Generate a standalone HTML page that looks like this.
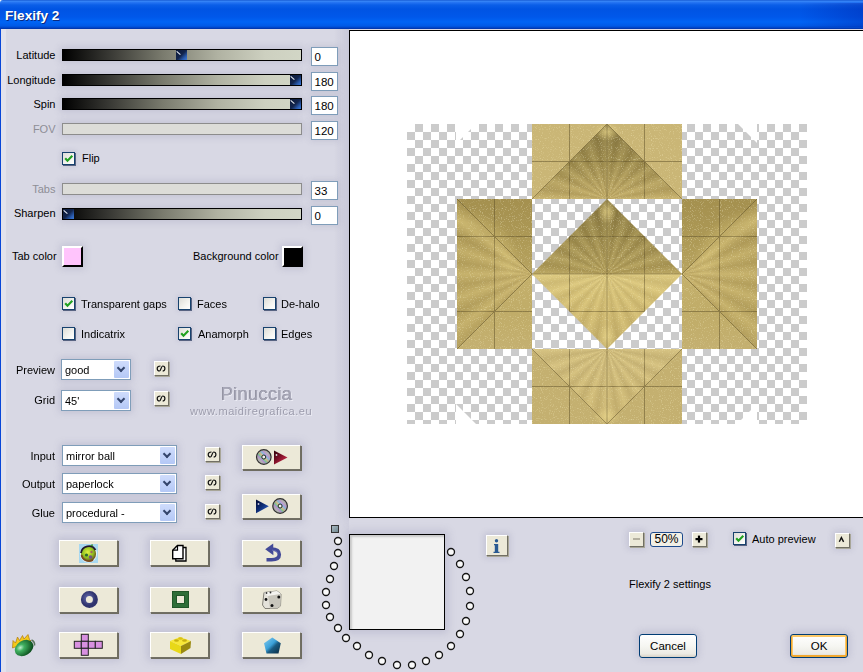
<!DOCTYPE html>
<html><head><meta charset="utf-8">
<style>
*{box-sizing:border-box}
html,body{margin:0;padding:0}
body{width:863px;height:672px;overflow:hidden;position:relative;background:#d8d8e4;font-family:"Liberation Sans",sans-serif;font-size:11px;color:#000}
.a{position:absolute}
#title{left:0;top:0;width:863px;height:29px;background:linear-gradient(to bottom,#0848c8 0px,#3c8cf8 1px,#2a78f4 2px,#0a5ee8 5px,#0054e3 9px,#0058ea 17px,#0064f4 22px,#005ae6 26px,#0040c0 28px,#0030a0 29px)}
#title span{position:absolute;left:5px;top:8px;font-size:13.6px;font-weight:bold;color:#fff;text-shadow:1px 1px 0 #0a2a80}
#lborder{left:0;top:29px;width:1px;height:643px;background:#0846d8}
.lab{position:absolute;text-align:right;width:60px;line-height:12px}
.dis{color:#8e8e96}
.sl{position:absolute;left:62px;width:240px;height:12px;border:1px solid #000;box-shadow:0 0 7px 2px rgba(110,110,150,0.2);background:linear-gradient(to right,#000 0%,#343430 18%,#7a7b6e 42%,#b0b2a2 65%,#cdd0c0 85%,#d2d6c6 100%)}
.sl.dis{border-color:#8c8c8c;background:#dcdcd8}
.th{position:absolute;top:0;width:11px;height:10px;background:linear-gradient(135deg,#0c1a3a 0%,#12244c 50%,#2a5cb0 78%,#3c7ad8 100%)}
.th:after{content:"";position:absolute;left:1px;top:0.5px;width:4.5px;height:1.3px;background:#eef2fa;transform:rotate(42deg);transform-origin:0 0}
.num{position:absolute;left:311px;width:27px;height:19px;border:1px solid #7f9db9;background:#fff;padding:2px 0 0 2.5px;line-height:14px;font-size:11.5px;box-shadow:0 0 6px 1px rgba(110,110,150,0.18)}
.cb{position:absolute;width:13px;height:13px;border:1px solid #17426e;box-shadow:1px 1px 0 rgba(10,30,70,0.6),0 0 5px 1px rgba(110,110,150,0.2);background:linear-gradient(135deg,#dcdcd7 0%,#f4f4f0 60%,#fff 100%)}
.cb svg{position:absolute;left:-1px;top:-1px}
.txt{position:absolute;line-height:12px;white-space:nowrap}
.sw{position:absolute;width:21px;height:21px;border:2px solid;border-width:2px 2px 2px 2px;border-color:#fff #000 #000 #fff;box-shadow:0 0 7px 2px rgba(110,110,150,0.2)}
.dd{position:absolute;left:61px;height:21px;border:1px solid #7f9db9;background:#fff;box-shadow:0 0 7px 2px rgba(110,110,150,0.2)}
.dd span{position:absolute;left:3px;top:4px;line-height:13px}
.dd i{position:absolute;right:1px;top:1px;width:15px;height:17px;background:linear-gradient(to bottom,#cfdcfc,#b4c8f6);border-radius:1px}
.dd i:after{content:"";position:absolute;left:4px;top:4px;width:4px;height:4px;border:solid #34456c;border-width:0 2px 2px 0;transform:rotate(45deg)}
.sb{position:absolute;width:15px;height:15px;background:#ece9d8;border:1px solid;border-color:#fff #716f64 #716f64 #fff;box-shadow:1px 1px 0 #a8a698,0 0 6px 2px rgba(110,110,150,0.2)}
.sb b{position:absolute;left:1px;top:0px;font-weight:bold;font-size:9.5px;transform:rotate(90deg);line-height:13px;width:12px;height:13px;text-align:center}
.bt{position:absolute;width:59px;height:26px;background:#ece9d8;border:1px solid;border-color:#fff #716f64 #716f64 #fff;box-shadow:1px 1px 0 #6e6c60,0 0 8px 3px rgba(110,110,150,0.22)}
#prev{left:349px;top:30px;width:514px;height:488px;border:1px solid #000;border-right:0;background:#fff}
.xpb{border:1px solid #003c74;border-radius:3px;background:linear-gradient(to bottom,#fff 0%,#f6f6f2 50%,#ecebe4 85%,#d8d2c6 100%);text-align:center;line-height:22px;font-size:11.5px;box-shadow:0 -1px 7px 2px rgba(110,110,150,0.2)}
.xpb.ok{box-shadow:inset 0 -1px 0 1px #f0a830,inset 0 0 0 2px #fcc868,0 -1px 7px 2px rgba(110,110,150,0.2)}
</style></head><body>
<div class="a" style="left:0;top:0;width:4px;height:4px;background:#fff"></div>
<div id="title" class="a" style="border-top-left-radius:3px"><span>Flexify 2</span></div>
<div class="a" style="left:800px;top:3px;width:63px;height:24px;background:linear-gradient(to right,rgba(0,20,150,0),rgba(0,20,150,0.3))"></div>
<div id="lborder" class="a"></div>
<div class="a" style="left:1px;top:29px;width:5px;height:643px;background:#e2e2ec"></div>
<div class="a" style="left:334px;top:29px;width:15px;height:510px;background:linear-gradient(to right,rgba(120,120,160,0),rgba(120,120,160,0.16));-webkit-mask-image:linear-gradient(to bottom,#000 0,#000 480px,transparent 510px);mask-image:linear-gradient(to bottom,#000 0,#000 480px,transparent 510px)"></div>

<!-- sliders -->
<div class="lab" style="left:-4.5px;top:49px">Latitude</div>
<div class="sl" style="top:49px"><div class="th" style="left:113px"></div></div>
<div class="num" style="top:47px">0</div>

<div class="lab" style="left:-4.5px;top:74px">Longitude</div>
<div class="sl" style="top:74px"><div class="th" style="left:227px"></div></div>
<div class="num" style="top:72px">180</div>

<div class="lab" style="left:-4.5px;top:98px">Spin</div>
<div class="sl" style="top:98px"><div class="th" style="left:227px"></div></div>
<div class="num" style="top:96px">180</div>

<div class="lab dis" style="left:-4.5px;top:123px">FOV</div>
<div class="sl dis" style="top:123px"></div>
<div class="num" style="top:121px">120</div>

<div class="cb on" style="left:62px;top:152px"><svg width="13" height="13"><path d="M3.2,6.2 L5.5,8.8 L10.3,3.8" stroke="#21a121" stroke-width="2.1" fill="none"/></svg></div>
<div class="txt" style="left:82px;top:152px">Flip</div>

<div class="lab dis" style="left:-4.5px;top:183px">Tabs</div>
<div class="sl dis" style="top:183px"></div>
<div class="num" style="top:181px">33</div>

<div class="lab" style="left:-4.5px;top:207px">Sharpen</div>
<div class="sl" style="top:208px"><div class="th" style="left:0px"></div></div>
<div class="num" style="top:206px">0</div>

<div class="txt" style="left:12px;top:250px">Tab color</div>
<div class="sw" style="left:62px;top:246px;background:#ffc4fc"></div>
<div class="txt" style="left:193px;top:250px">Background color</div>
<div class="sw" style="left:282px;top:246px;background:#000"></div>

<div id="prev" class="a"></div>
<div class="a" id="pv" style="left:0;top:0;width:863px;height:672px;filter:saturate(1.0)">
<svg class="a" style="left:407px;top:124px" width="400" height="300" viewBox="0 0 400 300">
<defs>
<pattern id="chk" width="16" height="16" patternUnits="userSpaceOnUse"><rect width="16" height="16" fill="#fff"/><rect x="8" y="0" width="8" height="8" fill="#cbcbcb"/><rect x="0" y="8" width="8" height="8" fill="#cbcbcb"/></pattern>
<linearGradient id="tA" gradientUnits="userSpaceOnUse" x1="0" y1="0" x2="0" y2="75"><stop offset="0" stop-color="#867640"/><stop offset="0.5" stop-color="#9c8a4c"/><stop offset="1" stop-color="#c2ac68"/></linearGradient>
<linearGradient id="bV" gradientUnits="userSpaceOnUse" x1="0" y1="225" x2="0" y2="300"><stop offset="0" stop-color="#d2be7e"/><stop offset="1" stop-color="#ccb672"/></linearGradient>
<linearGradient id="dT" gradientUnits="userSpaceOnUse" x1="0" y1="75" x2="0" y2="150"><stop offset="0" stop-color="#86763e"/><stop offset="1" stop-color="#b29e5a"/></linearGradient>
<linearGradient id="dB" gradientUnits="userSpaceOnUse" x1="0" y1="150" x2="0" y2="225"><stop offset="0" stop-color="#dcc87e"/><stop offset="0.5" stop-color="#d2bc72"/><stop offset="1" stop-color="#c6b06a"/></linearGradient>
<linearGradient id="sideV" gradientUnits="userSpaceOnUse" x1="0" y1="75" x2="0" y2="225"><stop offset="0" stop-color="#a89454"/><stop offset="0.25" stop-color="#b4a05c"/><stop offset="0.5" stop-color="#c4b06c"/><stop offset="0.75" stop-color="#c0ac68"/><stop offset="1" stop-color="#c4b070"/></linearGradient>
<linearGradient id="lT" gradientUnits="userSpaceOnUse" x1="50" y1="0" x2="125" y2="0"><stop offset="0" stop-color="#b6a05a"/><stop offset="1" stop-color="#c8b068"/></linearGradient>
<linearGradient id="rT" gradientUnits="userSpaceOnUse" x1="350" y1="0" x2="275" y2="0"><stop offset="0" stop-color="#b6a05a"/><stop offset="1" stop-color="#c8b068"/></linearGradient>
<filter id="nz" x="0" y="0" width="100%" height="100%"><feTurbulence type="fractalNoise" baseFrequency="0.9" numOctaves="1" seed="3" result="t"/><feColorMatrix in="t" type="matrix" values="0 0 0 0 1  0 0 0 0 0.93  0 0 0 0 0.55  0 0 0 1.4 -0.8" result="c"/><feComposite in="c" in2="SourceAlpha" operator="in" result="m"/><feMerge><feMergeNode in="SourceGraphic"/><feMergeNode in="m"/></feMerge></filter>
<radialGradient id="spk" cx="0.5" cy="0.5" r="0.5"><stop offset="0" stop-color="#e8d488" stop-opacity="0.75"/><stop offset="1" stop-color="#e8d488" stop-opacity="0"/></radialGradient>
<radialGradient id="swl" cx="0.5" cy="0.5" r="0.5"><stop offset="0.55" stop-color="#e0cc80" stop-opacity="0"/><stop offset="0.75" stop-color="#e0cc80" stop-opacity="0.35"/><stop offset="0.95" stop-color="#e0cc80" stop-opacity="0"/></radialGradient>
</defs>
<rect width="400" height="300" fill="url(#chk)"/>
<polygon points="49,0 69,0 49,20" fill="#fff"/>
<polygon points="331,0 350,0 350,19" fill="#fff"/>
<polygon points="49,280 49,300 69,300" fill="#fff"/>
<polygon points="350,280 350,300 330,300" fill="#fff"/>
<g filter="url(#nz)">
<rect x="125" y="0" width="150" height="75" fill="#cab676"/>
<polygon points="200,0 125,75 275,75" fill="url(#tA)"/>
<rect x="50" y="75" width="75" height="150" fill="url(#sideV)"/>
<polygon points="50,75 125,75 125,150" fill="#9a8846" opacity="0.3"/>
<polygon points="50,75 125,150 50,225" fill="url(#lT)" opacity="0.5"/>
<rect x="275" y="75" width="75" height="150" fill="url(#sideV)"/>
<polygon points="350,75 275,75 275,150" fill="#9a8846" opacity="0.3"/>
<polygon points="350,75 275,150 350,225" fill="url(#rT)" opacity="0.5"/>
<rect x="125" y="225" width="150" height="75" fill="#c4b070"/>
<polygon points="125,225 275,225 200,300" fill="url(#bV)"/>
<polygon points="200,75 275,150 125,150" fill="url(#dT)"/>
<polygon points="125,150 275,150 200,225" fill="url(#dB)"/>
</g>
<g>
<ellipse cx="200" cy="8" rx="14" ry="9" fill="url(#spk)"/>
<ellipse cx="200" cy="88" rx="10" ry="12" fill="url(#spk)"/>
<ellipse cx="200" cy="212" rx="10" ry="12" fill="url(#spk)"/>
<ellipse cx="200" cy="292" rx="14" ry="9" fill="url(#spk)"/>
<clipPath id="clL"><rect x="50" y="75" width="75" height="75"/></clipPath>
<clipPath id="clR"><rect x="275" y="75" width="75" height="75"/></clipPath>
<circle cx="50" cy="150" r="70" fill="url(#swl)" clip-path="url(#clL)"/>
<circle cx="350" cy="150" r="70" fill="url(#swl)" clip-path="url(#clR)"/>
</g>
<g stroke="#5e5028" stroke-width="1" fill="none" opacity="0.5">
<path d="M162.5,0V75M200,0V75M237.5,0V75M125,37.5H275"/>
<path d="M200,0L125,75M200,0L275,75"/>
<path d="M162.5,225V300M200,225V300M237.5,225V300M125,262.5H275"/>
<path d="M125,225L200,300M275,225L200,300"/>
<path d="M87.5,75V225M50,112.5H125M50,187.5H125"/>
<path d="M50,75L125,150L50,225"/>
<path d="M312.5,75V225M275,112.5H350M275,187.5H350"/>
<path d="M350,75L275,150L350,225"/>
<path d="M162.5,112.5V187.5M200,75V225M237.5,112.5V187.5M162.5,112.5H237.5M125,150H275M162.5,187.5H237.5"/>
</g>
</svg>
<div class="a ray" style="left:532px;top:124px;width:150px;height:75px;clip-path:polygon(75px 0,0 75px,150px 75px);background:repeating-conic-gradient(from 0deg at 75px 75px,rgba(255,240,170,0.13) 0deg,rgba(60,45,10,0.08) 9deg,rgba(255,240,170,0.13) 18deg)"></div>
<div class="a ray" style="left:532px;top:349px;width:150px;height:75px;clip-path:polygon(0 0,150px 0,75px 75px);background:repeating-conic-gradient(from 0deg at 75px 0px,rgba(255,240,170,0.13) 0deg,rgba(60,45,10,0.08) 9deg,rgba(255,240,170,0.13) 18deg)"></div>
<div class="a ray" style="left:457px;top:199px;width:75px;height:150px;clip-path:polygon(0 0,75px 75px,0 150px);background:repeating-conic-gradient(from 0deg at 75px 75px,rgba(255,240,170,0.13) 0deg,rgba(60,45,10,0.08) 9deg,rgba(255,240,170,0.13) 18deg)"></div>
<div class="a ray" style="left:682px;top:199px;width:75px;height:150px;clip-path:polygon(75px 0,0 75px,75px 150px);background:repeating-conic-gradient(from 0deg at 0px 75px,rgba(255,240,170,0.13) 0deg,rgba(60,45,10,0.08) 9deg,rgba(255,240,170,0.13) 18deg)"></div>
<div class="a ray" style="left:532px;top:199px;width:150px;height:150px;clip-path:polygon(75px 0,150px 75px,75px 150px,0 75px);background:repeating-conic-gradient(from 0deg at 75px 75px,rgba(255,240,170,0.13) 0deg,rgba(60,45,10,0.08) 9deg,rgba(255,240,170,0.13) 18deg)"></div>

<div class="cb on" style="left:62px;top:297px"><svg width="13" height="13"><path d="M3.2,6.2 L5.5,8.8 L10.3,3.8" stroke="#21a121" stroke-width="2.1" fill="none"/></svg></div>
<div class="txt" style="left:81px;top:298px">Transparent gaps</div>
<div class="cb" style="left:178px;top:297px"></div>
<div class="txt" style="left:197px;top:298px">Faces</div>
<div class="cb" style="left:263px;top:297px"></div>
<div class="txt" style="left:281px;top:298px">De-halo</div>
<div class="cb" style="left:62px;top:327px"></div>
<div class="txt" style="left:81px;top:328px">Indicatrix</div>
<div class="cb on" style="left:178px;top:327px"><svg width="13" height="13"><path d="M3.2,6.2 L5.5,8.8 L10.3,3.8" stroke="#21a121" stroke-width="2.1" fill="none"/></svg></div>
<div class="txt" style="left:198px;top:328px">Anamorph</div>
<div class="cb" style="left:263px;top:327px"></div>
<div class="txt" style="left:281px;top:328px">Edges</div>

<div class="lab" style="left:-5px;top:364px">Preview</div>
<div class="dd" style="top:359px;width:70px"><span>good</span><i></i></div>
<div class="sb" style="left:154px;top:361px"></div>
<div class="lab" style="left:-5px;top:394px">Grid</div>
<div class="dd" style="top:390px;width:70px"><span>45'</span><i></i></div>
<div class="sb" style="left:154px;top:391px"></div>

<div class="txt" id="wm1" style="left:221px;top:385px;font-size:18.5px;line-height:18px;color:#a6a6b6;letter-spacing:0.2px;text-shadow:-0.5px -0.3px 0 #80808f,0.6px 0.6px 0 #eeeef6">Pinuccia</div>
<div class="txt" id="wm2" style="left:190px;top:405px;font-size:11px;line-height:12px;color:#9c9cac;letter-spacing:0.55px;text-shadow:0.6px 0.6px 0 #eeeef6">www.maidiregrafica.eu</div>

<div class="lab" style="left:-5px;top:450px">Input</div>
<div class="dd" style="left:62px;top:445px;width:115px"><span>mirror ball</span><i></i></div>
<div class="sb" style="left:205px;top:447px"></div>
<div class="lab" style="left:-5px;top:478px">Output</div>
<div class="dd" style="left:62px;top:473px;width:115px"><span>paperlock</span><i></i></div>
<div class="sb" style="left:205px;top:475px"></div>
<div class="lab" style="left:-5px;top:507px">Glue</div>
<div class="dd" style="left:62px;top:502px;width:115px"><span>procedural -</span><i></i></div>
<div class="sb" style="left:205px;top:504px"></div>

<div class="bt" style="left:242px;top:445px;width:59px;height:25px"></div>
<div class="bt" style="left:242px;top:494px;width:59px;height:25px"></div>

<div class="bt" style="left:59px;top:540px"></div>
<div class="bt" style="left:150px;top:540px"></div>
<div class="bt" style="left:242px;top:540px"></div>
<div class="bt" style="left:59px;top:587px"></div>
<div class="bt" style="left:150px;top:587px"></div>
<div class="bt" style="left:242px;top:587px"></div>
<div class="bt" style="left:59px;top:632px"></div>
<div class="bt" style="left:150px;top:632px"></div>
<div class="bt" style="left:242px;top:632px"></div>

</div>
<div class="a" style="left:331px;top:525px;width:8px;height:8px;border:1px solid #333;background:linear-gradient(135deg,#a8b8c0,#708890)"></div>
<div class="a" style="left:349px;top:534px;width:96px;height:96px;border:1.5px solid #000;background:#f2f2f2;box-shadow:inset 2px 2px 2px #c8c8c8,0 0 8px 3px rgba(110,110,150,0.22)"></div>
<svg class="a" style="left:0;top:0" width="863" height="672" id="dots"><circle cx="338" cy="541" r="3.5" fill="#fafafa" stroke="#151515" stroke-width="1.35"/><circle cx="338" cy="553" r="3.5" fill="#fafafa" stroke="#151515" stroke-width="1.35"/><circle cx="334" cy="566" r="3.5" fill="#fafafa" stroke="#151515" stroke-width="1.35"/><circle cx="330" cy="579" r="3.5" fill="#fafafa" stroke="#151515" stroke-width="1.35"/><circle cx="326" cy="592" r="3.5" fill="#fafafa" stroke="#151515" stroke-width="1.35"/><circle cx="326" cy="605" r="3.5" fill="#fafafa" stroke="#151515" stroke-width="1.35"/><circle cx="330" cy="617" r="3.5" fill="#fafafa" stroke="#151515" stroke-width="1.35"/><circle cx="338" cy="628" r="3.5" fill="#fafafa" stroke="#151515" stroke-width="1.35"/><circle cx="346" cy="638" r="3.5" fill="#fafafa" stroke="#151515" stroke-width="1.35"/><circle cx="357" cy="646" r="3.5" fill="#fafafa" stroke="#151515" stroke-width="1.35"/><circle cx="369" cy="655" r="3.5" fill="#fafafa" stroke="#151515" stroke-width="1.35"/><circle cx="382" cy="661" r="3.5" fill="#fafafa" stroke="#151515" stroke-width="1.35"/><circle cx="397" cy="665" r="3.5" fill="#fafafa" stroke="#151515" stroke-width="1.35"/><circle cx="412" cy="665" r="3.5" fill="#fafafa" stroke="#151515" stroke-width="1.35"/><circle cx="426" cy="661" r="3.5" fill="#fafafa" stroke="#151515" stroke-width="1.35"/><circle cx="439" cy="655" r="3.5" fill="#fafafa" stroke="#151515" stroke-width="1.35"/><circle cx="451" cy="646" r="3.5" fill="#fafafa" stroke="#151515" stroke-width="1.35"/><circle cx="460" cy="634" r="3.5" fill="#fafafa" stroke="#151515" stroke-width="1.35"/><circle cx="466" cy="621" r="3.5" fill="#fafafa" stroke="#151515" stroke-width="1.35"/><circle cx="470" cy="606" r="3.5" fill="#fafafa" stroke="#151515" stroke-width="1.35"/><circle cx="470" cy="591" r="3.5" fill="#fafafa" stroke="#151515" stroke-width="1.35"/><circle cx="466" cy="577" r="3.5" fill="#fafafa" stroke="#151515" stroke-width="1.35"/><circle cx="460" cy="564" r="3.5" fill="#fafafa" stroke="#151515" stroke-width="1.35"/><circle cx="451" cy="552" r="3.5" fill="#fafafa" stroke="#151515" stroke-width="1.35"/></svg>

<div class="a" style="left:486px;top:535px;width:22px;height:21px;background:#ece9d8;border:1px solid;border-color:#fff #716f64 #716f64 #fff;box-shadow:1px 1px 0 #a8a698,0 0 6px 2px rgba(110,110,150,0.2)"></div>

<div class="sb" style="left:629px;top:532px"></div>
<div class="a" style="left:650px;top:532px;width:33px;height:15px;border:1px solid #1c4a8c;border-radius:3px;background:#f2f0e6;text-align:center;line-height:13px;font-size:12px">50%</div>
<div class="sb" style="left:692px;top:532px"></div>
<div class="cb on" style="left:733px;top:532px"><svg width="13" height="13"><path d="M3.2,6.2 L5.5,8.8 L10.3,3.8" stroke="#21a121" stroke-width="2.1" fill="none"/></svg></div>
<div class="txt" style="left:752px;top:533px">Auto preview</div>
<div class="sb" style="left:835px;top:533px"></div>

<div class="txt" style="left:629px;top:578px">Flexify 2 settings</div>
<div class="a xpb" style="left:639px;top:634px;width:58px;height:24px">Cancel</div>
<div class="a xpb ok" style="left:790px;top:634px;width:58px;height:24px">OK</div>

<svg class="a" style="left:0;top:0;pointer-events:none" width="863" height="672">
<defs>
<radialGradient id="cdg" cx="0.5" cy="0.5" r="0.5"><stop offset="0.2" stop-color="#d0d0d0"/><stop offset="1" stop-color="#a4a4a4"/></radialGradient>
<linearGradient id="rb" x1="0" y1="1" x2="1" y2="0"><stop offset="0.18" stop-color="#b0b0b0" stop-opacity="0"/><stop offset="0.3" stop-color="#b070e0" stop-opacity="0.85"/><stop offset="0.4" stop-color="#50d080" stop-opacity="0.85"/><stop offset="0.5" stop-color="#f0b050" stop-opacity="0.6"/><stop offset="0.6" stop-color="#60c0f0" stop-opacity="0.85"/><stop offset="0.7" stop-color="#c080e0" stop-opacity="0.85"/><stop offset="0.82" stop-color="#b0b0b0" stop-opacity="0"/></linearGradient>
<linearGradient id="redt" x1="0" y1="0" x2="1" y2="1"><stop offset="0" stop-color="#2a0008"/><stop offset="0.45" stop-color="#801028"/><stop offset="1" stop-color="#e83858"/></linearGradient>
<linearGradient id="blut" x1="0" y1="0" x2="1" y2="1"><stop offset="0" stop-color="#000830"/><stop offset="0.5" stop-color="#10307a"/><stop offset="1" stop-color="#3870e0"/></linearGradient>
<radialGradient id="plg" cx="0.45" cy="0.4" r="0.6"><stop offset="0" stop-color="#e0f040"/><stop offset="0.6" stop-color="#90c020"/><stop offset="1" stop-color="#6a4a20"/></radialGradient>
<linearGradient id="pent" x1="0" y1="0" x2="1" y2="1"><stop offset="0" stop-color="#8ad0f0"/><stop offset="0.45" stop-color="#3aa0d8"/><stop offset="0.6" stop-color="#1a5a80"/><stop offset="1" stop-color="#0a2a40"/></linearGradient>
<radialGradient id="pear" cx="0.35" cy="0.35" r="0.7"><stop offset="0" stop-color="#c0f0d0"/><stop offset="0.3" stop-color="#40b060"/><stop offset="1" stop-color="#0a4a1a"/></radialGradient>
<radialGradient id="ring" cx="0.4" cy="0.4" r="0.6"><stop offset="0" stop-color="#6a70b4"/><stop offset="1" stop-color="#30346e"/></radialGradient>
</defs>
<!-- big button 1: CD + red triangle -->
<circle cx="263.8" cy="457" r="7.3" fill="url(#cdg)" stroke="#303030" stroke-width="1.2"/>
<circle cx="263.8" cy="457" r="6.3" fill="url(#rb)" opacity="0.75"/>
<circle cx="263.8" cy="457" r="2" fill="#f0f0f0" stroke="#202020" stroke-width="1"/>
<polygon points="274,450.5 287.5,457.5 274,464.5" fill="url(#redt)"/>
<circle cx="276.5" cy="455" r="0.9" fill="#ddd"/>
<!-- big button 2 -->
<polygon points="256,499.5 268.8,506.3 256,513.3" fill="url(#blut)"/>
<circle cx="258.5" cy="504" r="0.9" fill="#ccd"/>
<circle cx="280.1" cy="506" r="7.3" fill="url(#cdg)" stroke="#303030" stroke-width="1.2"/>
<circle cx="280.1" cy="506" r="6.3" fill="url(#rb)" opacity="0.75"/>
<circle cx="280.1" cy="506" r="2" fill="#f0f0f0" stroke="#202020" stroke-width="1"/>
<!-- A1 planet -->
<rect x="79" y="544" width="19" height="19" fill="#a8d8f0"/>
<circle cx="88.5" cy="553.8" r="8.6" fill="#e8f4fa"/>
<circle cx="88.5" cy="553.8" r="7.6" fill="url(#plg)"/>
<path d="M81,553 A7.8,7.8 0 0 1 95.5,550" stroke="#201830" stroke-width="1.8" fill="none"/>
<path d="M81.5,555 A7.6,7.6 0 0 0 93,560" stroke="#7a4a20" stroke-width="1.6" fill="none"/>
<circle cx="86.5" cy="555" r="1.6" fill="#2a6a30"/>
<circle cx="90.5" cy="557" r="1.8" fill="#6a3aa0" opacity="0.8"/>
<circle cx="91.5" cy="552" r="1.2" fill="#a04a70" opacity="0.8"/>
<path d="M90,545.5 L92.5,544 L93,546.5" fill="#3a8a30"/>
<!-- A2 pages -->
<path d="M175.8,547.5H186V561H175.8Z" fill="#fff" stroke="#000" stroke-width="1.3"/>
<path d="M177.5,545.5H183V558.8H172.7V550.2Z" fill="#fff" stroke="#000" stroke-width="1.4"/>
<path d="M172.7,550.2H177.5V545.5" fill="none" stroke="#000" stroke-width="1.2"/>
<!-- A3 undo -->
<path d="M271,549 C276.5,549 279.3,551 279.3,554.6 C279.3,558.3 276,559.8 271.5,559.8 L266.5,559.8" stroke="#434a98" stroke-width="3.6" fill="none"/>
<polygon points="265.2,549.3 273.2,543.6 273.4,555.2" fill="#434a98"/>
<path d="M272,550.2 C275.5,550.5 277.5,551.5 277.8,553.5" stroke="#7a80c0" stroke-width="0.9" fill="none" opacity="0.7"/>
<!-- B1 ring -->
<circle cx="89.4" cy="599.4" r="6" fill="none" stroke="url(#ring)" stroke-width="5"/>
<!-- B2 green square -->
<rect x="174.5" y="593.5" width="12" height="12" fill="none" stroke="#2e6e38" stroke-width="5"/>
<rect x="172.4" y="591.4" width="16.2" height="16.2" fill="none" stroke="#1e5226" stroke-width="0.8"/>
<rect x="176.6" y="595.6" width="7.8" height="7.8" fill="none" stroke="#1e5226" stroke-width="0.8"/>
<!-- B3 die -->
<path d="M264,592.5 L277,591 L281,594 L280.5,606 L277,608.5 L265,608.5 L262.5,605 Z" fill="#e4e2da" stroke="#6a6860" stroke-width="0.8"/>
<path d="M264,592.5 L277,591 L281,594 L268,596 Z" fill="#f4f4f0"/>
<path d="M268,596 L281,594 L280.5,606 L277,608.5 L270,608.5 Z" fill="#c8c6bc"/>
<circle cx="266" cy="599.5" r="1.4" fill="#111"/>
<circle cx="278.8" cy="597" r="1.5" fill="#111"/>
<circle cx="272" cy="605.5" r="1.5" fill="#111"/>
<circle cx="266.5" cy="593" r="0.9" fill="#333"/>
<circle cx="270.5" cy="592.5" r="0.9" fill="#333"/>
<!-- C1 cross -->
<g fill="#d890e0" stroke="#222" stroke-width="1">
<rect x="81.3" y="634.3" width="7" height="7"/>
<rect x="74.3" y="641.3" width="7" height="7"/>
<rect x="81.3" y="641.3" width="7" height="7"/>
<rect x="88.3" y="641.3" width="7" height="7"/>
<rect x="95.3" y="641.3" width="7" height="7"/>
<rect x="81.3" y="648.3" width="7" height="7"/>
</g>
<!-- C2 lego -->
<path d="M170,641 L180,637 L191,641 L181,646 Z" fill="#f8e838"/>
<path d="M170,641 L181,646 L181,654 L170,649 Z" fill="#e8d818"/>
<path d="M181,646 L191,641 L190.5,648 L181,654 Z" fill="#9a8a10"/>
<ellipse cx="176.5" cy="640.5" rx="2.4" ry="1.3" fill="#c8b010"/>
<ellipse cx="184.5" cy="640.5" rx="2.4" ry="1.3" fill="#c8b010"/>
<ellipse cx="180.5" cy="638.5" rx="2.4" ry="1.3" fill="#d8c018"/>
<!-- C3 pentagon -->
<polygon points="272.3,637.4 280.8,643.2 278.5,653.5 266.5,653.5 264,643.2" fill="url(#pent)"/>
<!-- flaming pear -->
<path d="M12.5,648 L13,640.5 L15.5,643 L17.5,637 L19.5,640.5 L22.5,635.5 L24,639 L28,634.5 L29.5,639.5 L31,641 Z" fill="#f4c818" stroke="#b07a10" stroke-width="0.7"/>
<ellipse cx="24" cy="648" rx="10" ry="7.3" transform="rotate(-32 24 648)" fill="url(#pear)"/>
<path d="M31.5,640 Q35,641.5 34.5,645.5" stroke="#3a5a3a" stroke-width="1.6" fill="none" opacity="0.8"/>
<!-- zoom glyphs -->
<rect x="633" y="538" width="7" height="2" fill="#b4b0a0"/>
<rect x="695.5" y="538" width="7" height="2.2" fill="#000"/>
<rect x="697.9" y="535.6" width="2.2" height="7" fill="#000"/>
<path d="M839.3,541.8 L841.4,537.6 L843.6,541.9" stroke="#111" stroke-width="1.4" fill="none"/>
<!-- S glyphs -->
<path d="M160.5,366 C158.2,366 157.2,367.3 157.2,368.5 C157.2,369.8 158.2,371 159.5,371 C160.8,371 161.3,366 162.6,366 C164,366 164.9,367.2 164.9,368.5 C164.9,369.8 164,371 162.6,371" transform="translate(0,0)" stroke="#111" stroke-width="1.2" fill="none"/>
<path d="M160.5,366 C158.2,366 157.2,367.3 157.2,368.5 C157.2,369.8 158.2,371 159.5,371 C160.8,371 161.3,366 162.6,366 C164,366 164.9,367.2 164.9,368.5 C164.9,369.8 164,371 162.6,371" transform="translate(0,30)" stroke="#111" stroke-width="1.2" fill="none"/>
<path d="M160.5,366 C158.2,366 157.2,367.3 157.2,368.5 C157.2,369.8 158.2,371 159.5,371 C160.8,371 161.3,366 162.6,366 C164,366 164.9,367.2 164.9,368.5 C164.9,369.8 164,371 162.6,371" transform="translate(51,86)" stroke="#111" stroke-width="1.2" fill="none"/>
<path d="M160.5,366 C158.2,366 157.2,367.3 157.2,368.5 C157.2,369.8 158.2,371 159.5,371 C160.8,371 161.3,366 162.6,366 C164,366 164.9,367.2 164.9,368.5 C164.9,369.8 164,371 162.6,371" transform="translate(51,114)" stroke="#111" stroke-width="1.2" fill="none"/>
<path d="M160.5,366 C158.2,366 157.2,367.3 157.2,368.5 C157.2,369.8 158.2,371 159.5,371 C160.8,371 161.3,366 162.6,366 C164,366 164.9,367.2 164.9,368.5 C164.9,369.8 164,371 162.6,371" transform="translate(51,143)" stroke="#111" stroke-width="1.2" fill="none"/>
<!-- info i -->
<circle cx="496.5" cy="540.8" r="1.7" fill="#2a5a92"/>
<path d="M494,544 H498.2 V551.8 H499.5 V553 H493.5 V551.8 H494.8 V545.2 H494Z" fill="#2a5a92"/>
</svg>
</body></html>
